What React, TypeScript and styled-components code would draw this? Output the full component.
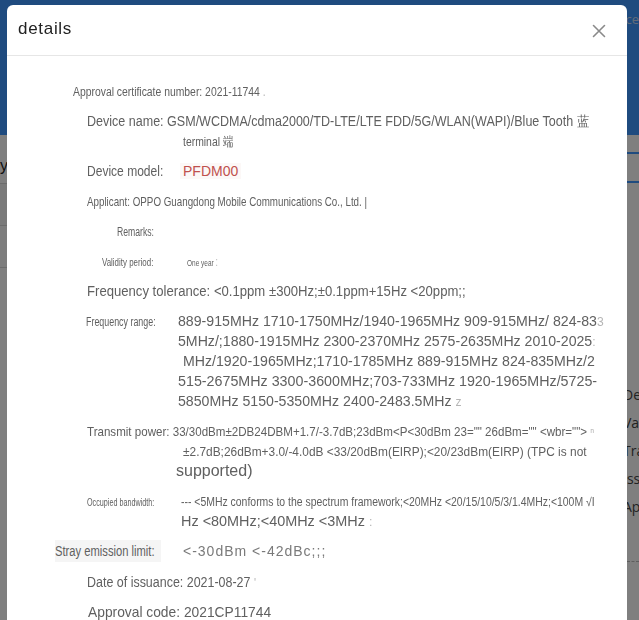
import React from "react";
import styled, { createGlobalStyle } from "styled-components";

const GlobalStyle = createGlobalStyle`
  html, body {
    margin: 0;
    padding: 0;
    overflow: hidden;
    font-family: "Liberation Sans", Arial, sans-serif;
  }
`;

// ---- page behind the dialog ----

const Page = styled.div`
  width: 639px;
  height: 620px;
  background: #ffffff;
  display: flex;
  flex-direction: column;
`;

const TopBar = styled.div`
  height: 135px;
  background: #3e96fe;
  display: flex;
  justify-content: flex-end;
  padding: 10px 0 0;
  box-sizing: border-box;
  color: #c7d9f5;
  font-family: "Open Sans", sans-serif;
  font-size: 13px;
`;

const Main = styled.div`
  flex: 1;
  display: flex;
`;

const LeftPane = styled.div`
  flex: 1;
  display: flex;
  flex-direction: column;
  padding-top: 22px;
`;

const LeftGlyph = styled.div`
  font-size: 16px;
  color: #222;
  height: 26px;
`;

const Band = styled.div<{ $h: number; $bg: string }>`
  height: ${(p) => p.$h}px;
  background: ${(p) => p.$bg};
  border-top: 1px solid #d8d8d8;
`;

const SidePane = styled.div`
  width: 21px;
  padding-top: 17px;
  display: flex;
  flex-direction: column;
  overflow: hidden;
`;

const SideRule = styled.div<{ $gap: number }>`
  border-top: 2px solid #3e96fe;
  margin-bottom: ${(p) => p.$gap}px;
`;

const SideItem = styled.div`
  font-family: "Open Sans", sans-serif;
  font-size: 14px;
  color: #454545;
  height: 28px;
  line-height: 28px;
  white-space: nowrap;
  margin-left: 5px;
`;

const SideDash = styled.div`
  border-top: 1px dashed #bdbdbd;
  margin-top: 40px;
`;

const Mask = styled.div`
  position: fixed;
  inset: 0;
  background: rgba(0, 0, 0, 0.5);
`;

// ---- dialog ----

const Dialog = styled.div`
  position: fixed;
  top: 5px;
  left: 7px;
  width: 620px;
  height: 660px;
  background: #fff;
  border-radius: 6px;
  overflow: hidden;
  display: flex;
  flex-direction: column;
`;

const DialogHeader = styled.div`
  height: 51px;
  border-bottom: 1px solid #e6e6e6;
  display: flex;
  align-items: center;
  justify-content: space-between;
  padding: 0 21px 0 11px;
  box-sizing: border-box;
`;

const Title = styled.div`
  font-size: 17px;
  letter-spacing: 0.7px;
  color: #222;
  margin-top: -2px;
`;

const CloseButton = styled.button`
  border: 0;
  background: none;
  padding: 0;
  width: 14px;
  height: 14px;
  display: flex;
  cursor: pointer;
  margin-top: 2px;
`;

const DialogBody = styled.div`
  padding-top: 25px;
  display: flex;
  flex-direction: column;
  gap: 10px;
  color: #606060;
`;

const Row = styled.div<{ $indent: number }>`
  display: flex;
  padding-left: ${(p) => p.$indent}px;
`;

const Col = styled.div`
  display: flex;
  flex-direction: column;
`;

const Line = styled.div<{ $shift?: number }>`
  height: 20px;
  line-height: 20px;
  white-space: nowrap;
  padding-left: ${(p) => p.$shift ?? 0}px;
`;

const Squeeze = styled.span<{ $size: number; $sx?: number; $ls?: number; $color?: string }>`
  display: inline-block;
  font-size: ${(p) => p.$size}px;
  letter-spacing: ${(p) => p.$ls ?? 0}px;
  color: ${(p) => p.$color ?? "inherit"};
  transform: scaleX(${(p) => p.$sx ?? 1});
  transform-origin: left center;
  white-space: nowrap;
`;

const Label = styled.div<{ $w: number }>`
  width: ${(p) => p.$w}px;
  flex: none;
  height: 20px;
  line-height: 20px;
  white-space: nowrap;
`;

const Model = styled.span`
  font-size: 14px;
  color: #c0504d;
  background: #fcf8f7;
  padding: 0 3px;
  margin-left: -3px;
`;

const Faint = styled.span`
  color: #b5b5b5;
  font-size: 12px;
`;

const Shaded = styled.div`
  width: 106px;
  height: 22px;
  margin-top: -1px;
  line-height: 22px;
  background: #f5f5f5;
  flex: none;
  white-space: nowrap;
`;

const LabelGap = styled.div<{ $w: number }>`
  width: ${(p) => p.$w}px;
  flex: none;
`;

function CloseIcon() {
  return (
    <svg width="14" height="14" viewBox="0 0 14 14">
      <path d="M1.5 1.5 L12.5 12.5 M12.5 1.5 L1.5 12.5" stroke="#8a8a8a" strokeWidth="1.6" strokeLinecap="round" />
    </svg>
  );
}

export default function App() {
  return (
    <>
      <GlobalStyle />
      <Page>
        <TopBar>Acce</TopBar>
        <Main>
          <LeftPane>
            <LeftGlyph>y</LeftGlyph>
            <Band $h={41} $bg="#f4f4f4" />
            <Band $h={41} $bg="#fafafa" />
            <Band $h={200} $bg="#ffffff" />
          </LeftPane>
          <SidePane>
            <SideRule $gap={27} />
            <SideRule $gap={198} />
            <SideItem>Dev</SideItem>
            <SideItem>Val</SideItem>
            <SideItem>Tra</SideItem>
            <SideItem>Issu</SideItem>
            <SideItem>Ap</SideItem>
            <SideDash />
          </SidePane>
        </Main>
      </Page>
      <Mask />
      <Dialog>
        <DialogHeader>
          <Title>details</Title>
          <CloseButton aria-label="close">
            <CloseIcon />
          </CloseButton>
        </DialogHeader>
        <DialogBody>
          <Row $indent={66}>
            <Line>
              <Squeeze $size={12} $sx={0.865}>
                Approval certificate number: 2021-11744 <Faint>.</Faint>
              </Squeeze>
            </Line>
          </Row>

          <Row $indent={80}>
            <Col>
              <Line>
                <Squeeze $size={14} $sx={0.895}>
                  Device name: GSM/WCDMA/cdma2000/TD-LTE/LTE FDD/5G/WLAN(WAPI)/Blue Tooth 蓝
                </Squeeze>
              </Line>
              <Line $shift={96}>
                <Squeeze $size={13} $sx={0.8}>
                  terminal 端
                </Squeeze>
              </Line>
            </Col>
          </Row>

          <Row $indent={80}>
            <Label $w={96}>
              <Squeeze $size={14} $sx={0.86}>
                Device model:
              </Squeeze>
            </Label>
            <Line>
              <Model>PFDM00</Model>
            </Line>
          </Row>

          <Row $indent={80}>
            <Line>
              <Squeeze $size={13} $sx={0.753}>
                Applicant: OPPO Guangdong Mobile Communications Co., Ltd. |
              </Squeeze>
            </Line>
          </Row>

          <Row $indent={110}>
            <Line>
              <Squeeze $size={12} $sx={0.72}>
                Remarks:
              </Squeeze>
            </Line>
          </Row>

          <Row $indent={95}>
            <Label $w={85}>
              <Squeeze $size={11} $sx={0.72}>
                Validity period:
              </Squeeze>
            </Label>
            <Line>
              <Squeeze $size={9} $sx={0.72}>
                One year <Faint>:</Faint>
              </Squeeze>
            </Line>
          </Row>

          <Row $indent={80}>
            <Line>
              <Squeeze $size={14} $sx={0.937}>
                Frequency tolerance: &lt;0.1ppm ±300Hz;±0.1ppm+15Hz &lt;20ppm;;
              </Squeeze>
            </Line>
          </Row>

          <Row $indent={79}>
            <Label $w={92}>
              <Squeeze $size={12} $sx={0.74}>
                Frequency range:
              </Squeeze>
            </Label>
            <Col>
              <Line>
                <Squeeze $size={14} $sx={1.01}>
                  889-915MHz 1710-1750MHz/1940-1965MHz 909-915MHz/ 824-83<Faint>3</Faint>
                </Squeeze>
              </Line>
              <Line>
                <Squeeze $size={14} $sx={1.01}>
                  5MHz/;1880-1915MHz 2300-2370MHz 2575-2635MHz 2010-2025<Faint>:</Faint>
                </Squeeze>
              </Line>
              <Line $shift={5}>
                <Squeeze $size={14} $sx={1.01}>
                  MHz/1920-1965MHz;1710-1785MHz 889-915MHz 824-835MHz/2
                </Squeeze>
              </Line>
              <Line>
                <Squeeze $size={14} $sx={1.02}>
                  515-2675MHz 3300-3600MHz;703-733MHz 1920-1965MHz/5725-
                </Squeeze>
              </Line>
              <Line>
                <Squeeze $size={14} $sx={1.01}>
                  5850MHz 5150-5350MHz 2400-2483.5MHz <Faint>z</Faint>
                </Squeeze>
              </Line>
            </Col>
          </Row>

          <Row $indent={80}>
            <Col>
              <Line>
                <Squeeze $size={13} $sx={0.89}>
                  Transmit power: 33/30dBm±2DB24DBM+1.7/-3.7dB;23dBm&lt;P&lt;30dBm 23="" 26dBm="" &lt;wbr=""&gt; <Faint>ⁿ</Faint>
                </Squeeze>
              </Line>
              <Line $shift={96}>
                <Squeeze $size={13} $sx={0.915}>
                  ±2.7dB;26dBm+3.0/-4.0dB &lt;33/20dBm(EIRP);&lt;20/23dBm(EIRP) (TPC is not
                </Squeeze>
              </Line>
              <Line $shift={89}>
                <Squeeze $size={16} $sx={1}>
                  supported)
                </Squeeze>
              </Line>
            </Col>
          </Row>

          <Row $indent={80}>
            <Label $w={94}>
              <Squeeze $size={10} $sx={0.72}>
                Occupied bandwidth:
              </Squeeze>
            </Label>
            <Col>
              <Line>
                <Squeeze $size={12} $sx={0.87}>
                  --- &lt;5MHz conforms to the spectrum framework;&lt;20MHz &lt;20/15/10/5/3/1.4MHz;&lt;100M √I
                </Squeeze>
              </Line>
              <Line $shift={-3}>
                <Squeeze $size={14} $sx={1.03}>
                  Hz &lt;80MHz;&lt;40MHz &lt;3MHz <Faint>:</Faint>
                </Squeeze>
              </Line>
            </Col>
          </Row>

          <Row $indent={48}>
            <Shaded>
              <Squeeze $size={14} $sx={0.8}>
                Stray emission limit:
              </Squeeze>
            </Shaded>
            <LabelGap $w={22} />
            <Line>
              <Squeeze $size={14} $ls={1} $color="#7a7a7a">
                &lt;-30dBm &lt;-42dBc;;;
              </Squeeze>
            </Line>
          </Row>

          <Row $indent={80}>
            <Line>
              <Squeeze $size={14} $sx={0.89}>
                Date of issuance: 2021-08-27 <Faint>'</Faint>
              </Squeeze>
            </Line>
          </Row>

          <Row $indent={81}>
            <Line>
              <Squeeze $size={15} $sx={0.92}>
                Approval code: 2021CP11744
              </Squeeze>
            </Line>
          </Row>
        </DialogBody>
      </Dialog>
    </>
  );
}
